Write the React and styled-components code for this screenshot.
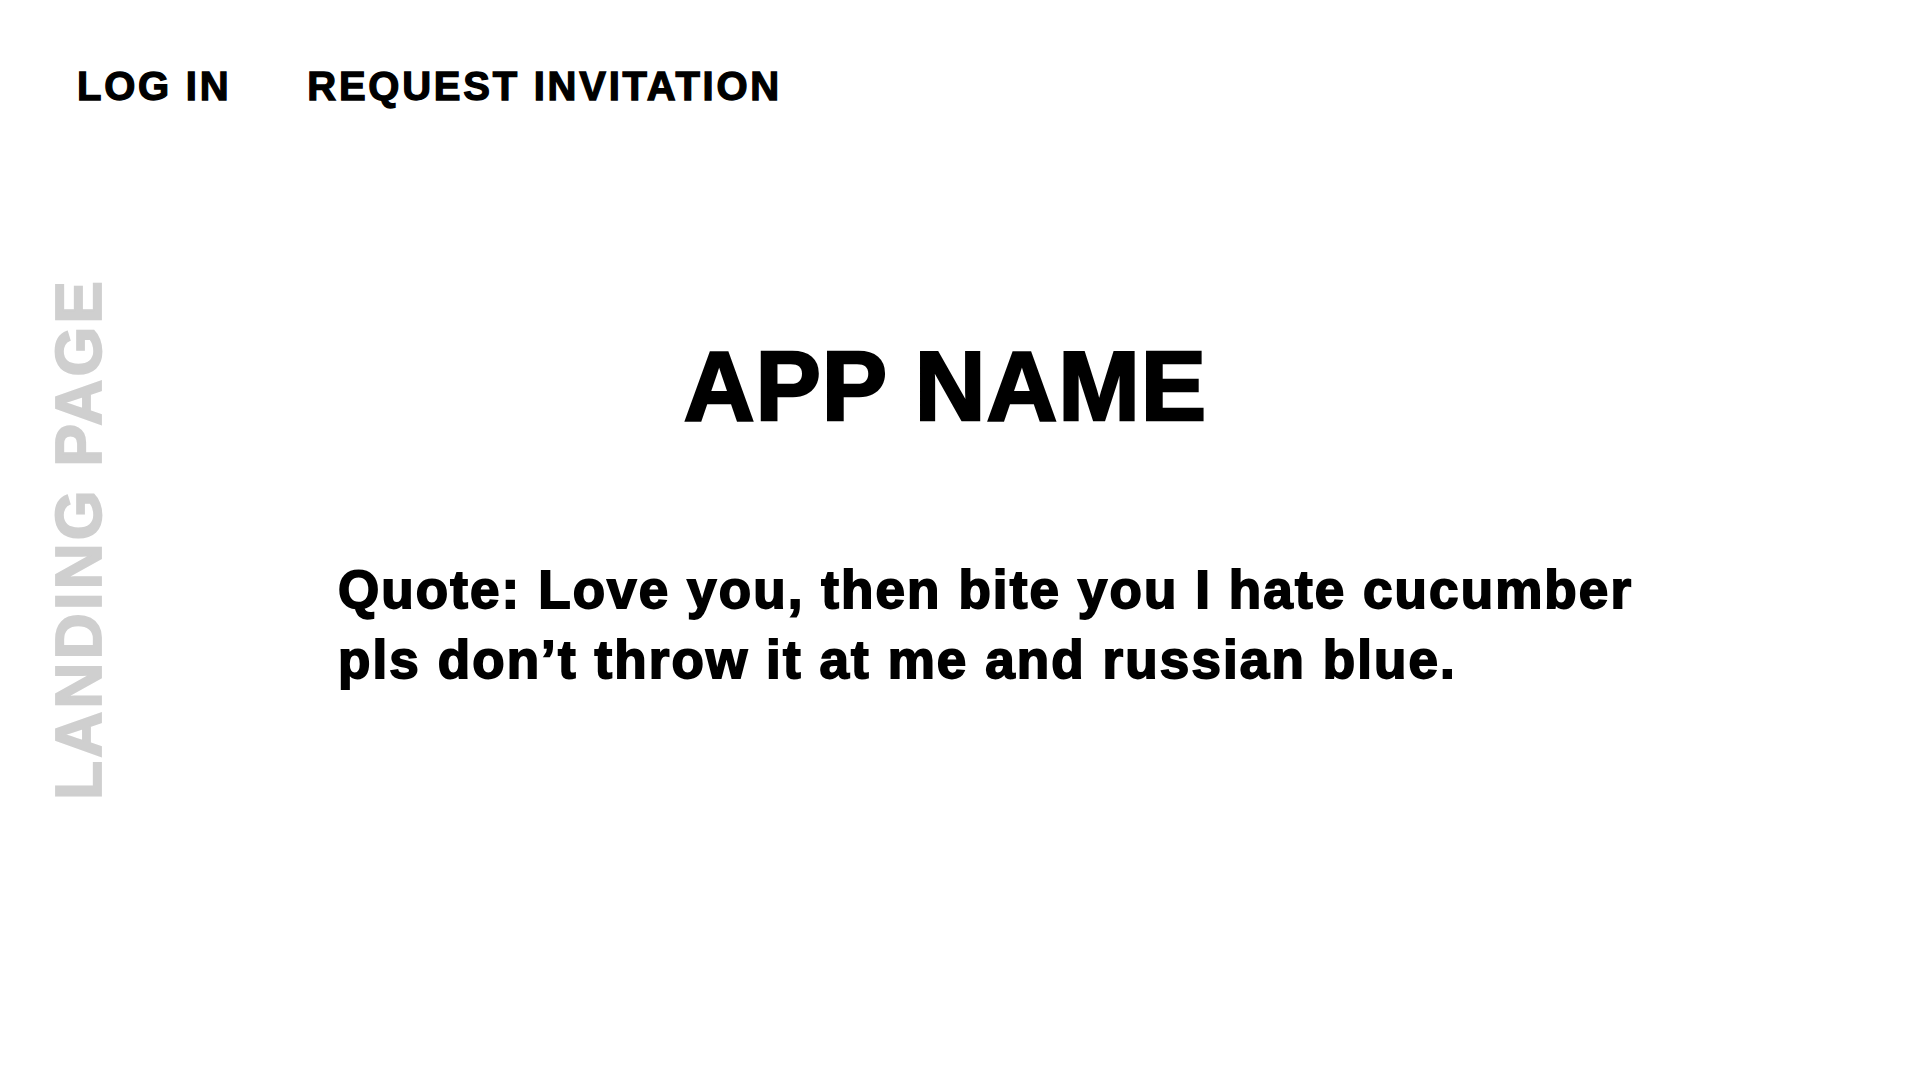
import React from "react";
import styled, { createGlobalStyle } from "styled-components";

const GlobalStyle = createGlobalStyle`
  html, body {
    margin: 0;
    padding: 0;
    background: #ffffff;
  }
  body {
    font-family: "Liberation Sans", Arial, sans-serif;
    color: #000000;
  }
`;

const Page = styled.div`
  width: 1920px;
  min-height: 1080px;
  display: flex;
  flex-direction: column;
`;

const Header = styled.nav`
  display: flex;
  align-items: center;
  gap: 76px;
  padding: 66px 0 0 77px;
`;

const NavLink = styled.a`
  font-size: 40px;
  line-height: 40px;
  font-weight: 700;
  letter-spacing: 2.75px;
  -webkit-text-stroke: 1.3px #000;
  color: #000;
  text-decoration: none;
  cursor: pointer;
`;

const Body = styled.div`
  display: flex;
  align-items: flex-start;
  padding-left: 47px;
`;

const Sidebar = styled.aside`
  padding-top: 172px;
`;

const PageLabel = styled.div`
  writing-mode: vertical-rl;
  transform: rotate(180deg);
  font-size: 64px;
  line-height: 64px;
  font-weight: 700;
  letter-spacing: 3px;
  -webkit-text-stroke: 1.8px #cfcfcf;
  color: #cfcfcf;
  white-space: nowrap;
`;

const Main = styled.main`
  display: flex;
  flex-direction: column;
  padding: 231px 0 0 227px;
`;

const Title = styled.h1`
  width: 1215px;
  margin: 0;
  text-align: center;
  font-size: 98px;
  line-height: 98px;
  font-weight: 700;
  letter-spacing: 1px;
  -webkit-text-stroke: 2.6px #000;
`;

const Quote = styled.p`
  max-width: 1320px;
  margin: 120px 0 0;
  font-size: 53px;
  line-height: 70px;
  font-weight: 700;
  letter-spacing: 2.1px;
  -webkit-text-stroke: 1.8px #000;
`;

export default function App() {
  return (
    <>
      <GlobalStyle />
      <Page>
        <Header>
          <NavLink>LOG IN</NavLink>
          <NavLink>REQUEST INVITATION</NavLink>
        </Header>
        <Body>
          <Sidebar>
            <PageLabel>LANDING PAGE</PageLabel>
          </Sidebar>
          <Main>
            <Title>APP NAME</Title>
            <Quote>
              Quote: Love you, then bite you I hate cucumber pls don’t throw it
              at me and russian blue.
            </Quote>
          </Main>
        </Body>
      </Page>
    </>
  );
}
